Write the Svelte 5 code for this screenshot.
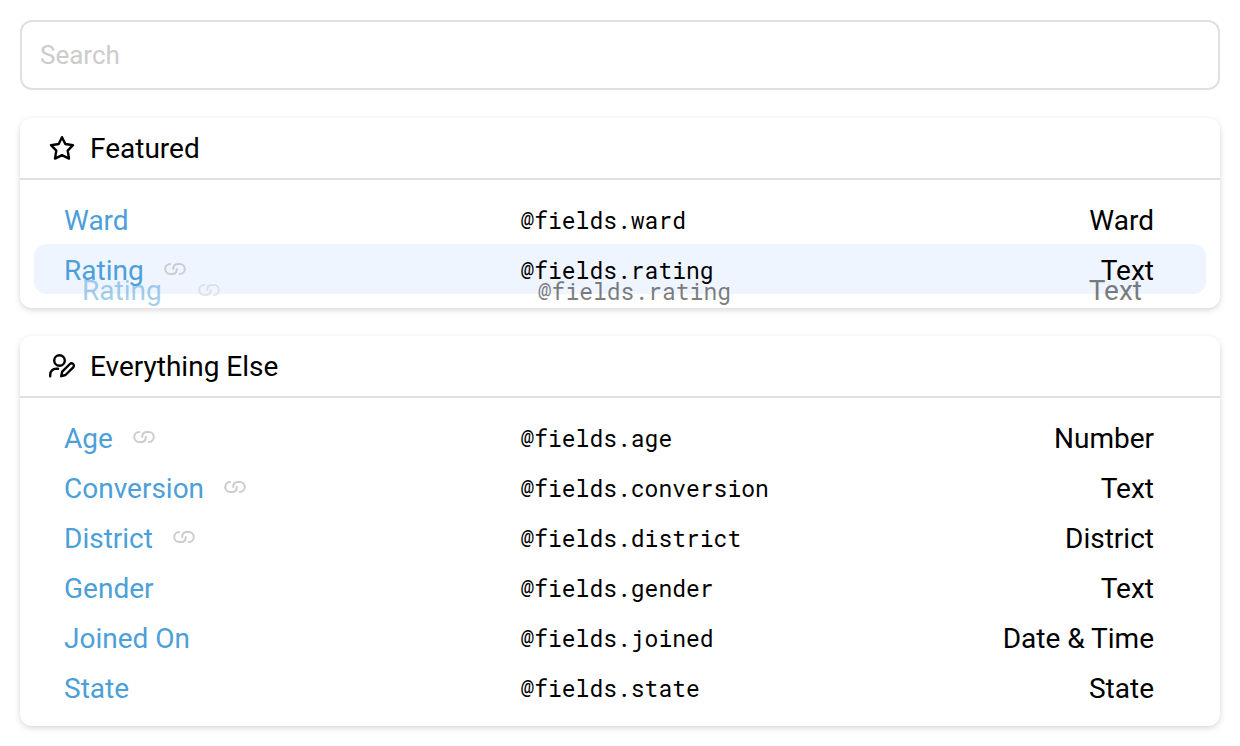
<script>
  const groups = [
    {
      title: 'Featured',
      icon: 'star',
      fields: [
        { name: 'Ward', key: 'ward', type: 'Ward' },
        { name: 'Rating', key: 'rating', type: 'Text', linked: true, dragging: true }
      ]
    },
    {
      title: 'Everything Else',
      icon: 'user',
      fields: [
        { name: 'Age', key: 'age', type: 'Number', linked: true },
        { name: 'Conversion', key: 'conversion', type: 'Text', linked: true },
        { name: 'District', key: 'district', type: 'District', linked: true },
        { name: 'Gender', key: 'gender', type: 'Text' },
        { name: 'Joined On', key: 'joined', type: 'Date & Time' },
        { name: 'State', key: 'state', type: 'State' }
      ]
    }
  ];
</script>

{#snippet linkIcon()}
  <svg class="link" viewBox="0 0 22 14" aria-hidden="true">
    <path d="M6.200 2A5 5 0 0 0 6.200 12H8.200C11 12 12.800 10.200 12.800 7" />
    <path d="M15.800 12A5 5 0 0 0 15.800 2H13.800C11 2 9.200 3.800 9.200 7" />
  </svg>
{/snippet}

<main>
  <input class="search" type="text" placeholder="Search" aria-label="Search" />

  {#each groups as group}
    <section>
      <h2>
        {#if group.icon === 'star'}
          <svg class="icon" viewBox="0 0 28 28" aria-hidden="true">
            <path d="M14 3.200 17.300 10 25 11.200 19.700 16.600 21 24.600 14 21.200 7 24.600 8.300 16.600 3 11.200 10.700 10Z" />
          </svg>
        {:else}
          <svg class="icon" viewBox="0 0 28 28" aria-hidden="true">
            <circle cx="11.500" cy="8.500" r="5.300" />
            <path d="M2.200 24.200v-1.500a6 6 0 0 1 6-6H10" />
            <path d="M13.200 24.200l1-4.500 7.700-7.700a2.200 2.200 0 0 1 3.300 3.300l-7.700 7.700Z" />
          </svg>
        {/if}
        <span>{group.title}</span>
      </h2>
      <div class="body">
        <table>
          <tbody>
            {#each group.fields as field}
              <tr class:dragging={field.dragging}>
                <td class="name">
                  <a href="#{field.key}">{field.name}</a>
                  {#if field.linked}{@render linkIcon()}{/if}
                </td>
                <td class="key">@fields.{field.key}</td>
                <td class="type">{field.type}</td>
              </tr>
            {/each}
          </tbody>
        </table>
        {#each group.fields.filter((f) => f.dragging) as field}
          <div class="ghost" aria-hidden="true">
            <span class="name">{field.name}{@render linkIcon()}</span>
            <span class="key">@fields.{field.key}</span>
            <span class="type">{field.type}</span>
          </div>
        {/each}
      </div>
    </section>
  {/each}
</main>

<style>
  :global(body) {
    background: #fff;
  }
  main {
    display: flex;
    flex-direction: column;
    gap: 28px;
    padding: 20px;
    font-family: Roboto, sans-serif;
    font-size: 28px;
    line-height: 32px;
    color: #000;
  }
  .search {
    box-sizing: border-box;
    width: 100%;
    height: 70px;
    padding: 0 18px;
    border: 2px solid #e0e0e0;
    border-radius: 12px;
    background: #fff;
    font: inherit;
    font-size: 26px;
    color: #000;
    outline: none;
  }
  .search::placeholder {
    color: #ccc;
    opacity: 1;
  }
  section {
    border-radius: 12px;
    background: #fff;
    box-shadow: 0 2px 6px rgba(0, 0, 0, 0.16);
  }
  h2 {
    display: flex;
    align-items: center;
    gap: 14px;
    margin: 0;
    height: 60px;
    padding: 0 28px;
    border-bottom: 2px solid #e0e0e0;
    font-size: 28px;
    font-weight: 400;
  }
  h2 span {
    padding-top: 2px;
  }
  .icon {
    width: 28px;
    height: 28px;
    fill: none;
    stroke: currentColor;
    stroke-width: 2.4;
    stroke-linejoin: round;
    stroke-linecap: round;
  }
  .body {
    position: relative;
    padding: 14px;
  }
  table {
    width: 100%;
    table-layout: fixed;
    border-collapse: collapse;
  }
  td {
    box-sizing: border-box;
    height: 50px;
    padding: 4px 0 0;
  }
  td.name {
    width: 41.5%;
    padding-left: 30px;
  }
  td.key {
    padding-top: 2px;
  }
  .name,
  a {
    color: #4c9fd8;
    text-decoration: none;
  }
  td.type {
    padding-right: 52px;
  }
  .key {
    font-family: "Roboto Mono", "DejaVu Sans Mono", monospace;
    font-size: 23px;
  }
  .type {
    text-align: right;
  }
  .link {
    width: 22px;
    height: 14px;
    margin-left: 13px;
    vertical-align: 4px;
    fill: none;
    stroke: #ccc;
    stroke-width: 2;
    stroke-linecap: round;
  }
  .dragging td {
    background: #eff5ff;
  }
  .dragging td:first-child {
    border-radius: 12px 0 0 12px;
  }
  .dragging td:last-child {
    border-radius: 0 12px 12px 0;
  }
  .ghost {
    position: absolute;
    left: 62px;
    right: 78px;
    bottom: 1px;
    display: grid;
    grid-template-columns: 43% 1fr auto;
    align-items: center;
    opacity: 0.5;
    pointer-events: none;
  }
  .ghost .link {
    margin-left: 36px;
    vertical-align: 3px;
  }
</style>
